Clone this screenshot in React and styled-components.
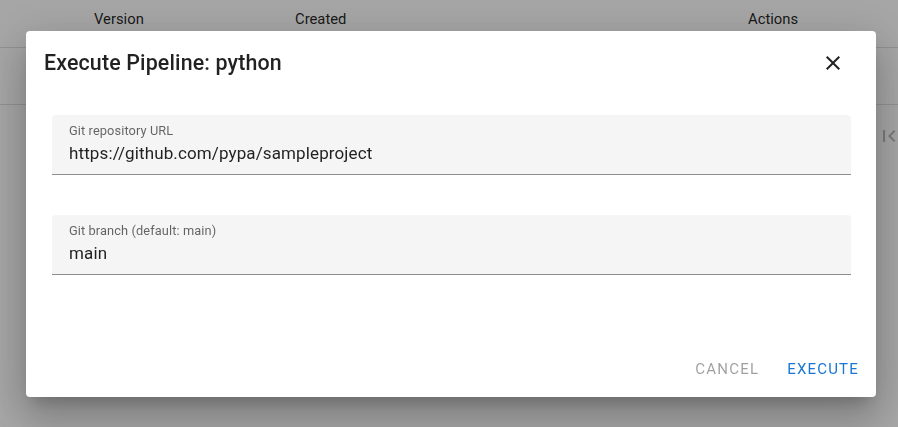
import React from 'react'
import styled, { createGlobalStyle } from 'styled-components'

const GlobalStyle = createGlobalStyle`
    html, body {
        margin: 0;
        padding: 0;
        background: #ffffff;
        font-family: Roboto, "Liberation Sans", Arial, sans-serif;
        overflow: hidden;
    }
`

const Page = styled.div`
    width: 898px;
    height: 427px;
    overflow: hidden;
    background: #ffffff;
`

const HeaderRow = styled.div`
    display: grid;
    grid-template-columns: 94px 201px 453px 1fr;
    height: 48px;
    box-sizing: border-box;
    padding-top: 9px;
    border-bottom: 1px solid #e0e0e0;
`

const HeaderCell = styled.div`
    font-size: 14.8px;
    font-weight: 400;
    line-height: 20px;
    color: rgba(0, 0, 0, 0.87);
`

const BodyRow = styled.div`
    height: 57px;
    box-sizing: border-box;
    border-bottom: 1px solid #e0e0e0;
`

const Pagination = styled.div`
    display: flex;
    justify-content: flex-end;
    padding-top: 19px;
    margin-right: -3px;
`

const Backdrop = styled.div`
    position: fixed;
    inset: 0;
    background: rgba(0, 0, 0, 0.35);
    display: flex;
    align-items: center;
    justify-content: center;
    padding-left: 4px;
`

const Dialog = styled.div`
    width: 850px;
    height: 366px;
    box-sizing: border-box;
    background: #ffffff;
    border-radius: 4px;
    box-shadow: 0px 11px 15px -7px rgba(0,0,0,0.2), 0px 24px 38px 3px rgba(0,0,0,0.14), 0px 9px 46px 8px rgba(0,0,0,0.12);
    display: flex;
    flex-direction: column;
`

const TitleBar = styled.div`
    display: flex;
    align-items: center;
    justify-content: space-between;
    padding: 16px 31px 17px 18px;
`

const Title = styled.h2`
    margin: 0;
    font-size: 21.4px;
    font-weight: 500;
    line-height: 32px;
    letter-spacing: 0.15px;
    color: rgba(0, 0, 0, 0.87);
`

const CloseButton = styled.button`
    border: none;
    background: none;
    padding: 0;
    width: 24px;
    height: 24px;
    display: flex;
    align-items: center;
    justify-content: center;
    color: rgba(0, 0, 0, 0.87);
    cursor: pointer;
`

const Content = styled.div`
    flex: 1;
    display: flex;
    flex-direction: column;
    gap: 40px;
    padding: 19px 25px 0 26px;
`

const Field = styled.div`
    height: 60px;
    box-sizing: border-box;
    background: #f5f5f5;
    border-radius: 4px 4px 0 0;
    border-bottom: 1px solid rgba(0, 0, 0, 0.42);
    padding: 7px 12px 0 17px;
`

const Label = styled.div`
    font-size: 12.8px;
    line-height: 17px;
    color: rgba(0, 0, 0, 0.6);
    letter-spacing: 0.1px;
`

const Value = styled.div`
    font-size: 17px;
    line-height: 24px;
    margin-top: 2px;
    color: rgba(0, 0, 0, 0.87);
    letter-spacing: 0.12px;
`

const Actions = styled.div`
    display: flex;
    justify-content: flex-end;
    gap: 12px;
    padding: 8px 9px 10px 8px;
`

const TextButton = styled.button`
    border: none;
    background: none;
    font-family: inherit;
    font-size: 15px;
    font-weight: 400;
    letter-spacing: 1.2px;
    line-height: 24px;
    padding: 6px 8px;
    color: ${props => props.primary ? '#1976d2' : 'rgba(0, 0, 0, 0.38)'};
    cursor: pointer;
`

const CloseIcon = () => (
    <svg width="24" height="24" viewBox="0 0 24 24" fill="currentColor">
        <path d="M19 6.41 17.59 5 12 10.59 6.41 5 5 6.41 10.59 12 5 17.59 6.41 19 12 13.41 17.59 19 19 17.59 13.41 12z" />
    </svg>
)

const FirstPageIcon = () => (
    <svg width="24" height="24" viewBox="0 0 24 24" fill="rgba(0,0,0,0.26)">
        <path d="M18.41 16.59 13.82 12l4.59-4.59L17 6l-6 6 6 6zM6 6h2v12H6z" />
    </svg>
)

export default function App() {
    return (
        <Page>
            <GlobalStyle />
            <HeaderRow>
                <div></div>
                <HeaderCell>Version</HeaderCell>
                <HeaderCell>Created</HeaderCell>
                <HeaderCell>Actions</HeaderCell>
            </HeaderRow>
            <BodyRow />
            <Pagination>
                <FirstPageIcon />
            </Pagination>
            <Backdrop>
                <Dialog>
                    <TitleBar>
                        <Title>Execute Pipeline: python</Title>
                        <CloseButton><CloseIcon /></CloseButton>
                    </TitleBar>
                    <Content>
                        <Field>
                            <Label>Git repository URL</Label>
                            <Value>https://github.com/pypa/sampleproject</Value>
                        </Field>
                        <Field>
                            <Label>Git branch (default: main)</Label>
                            <Value>main</Value>
                        </Field>
                    </Content>
                    <Actions>
                        <TextButton>CANCEL</TextButton>
                        <TextButton primary>EXECUTE</TextButton>
                    </Actions>
                </Dialog>
            </Backdrop>
        </Page>
    )
}
